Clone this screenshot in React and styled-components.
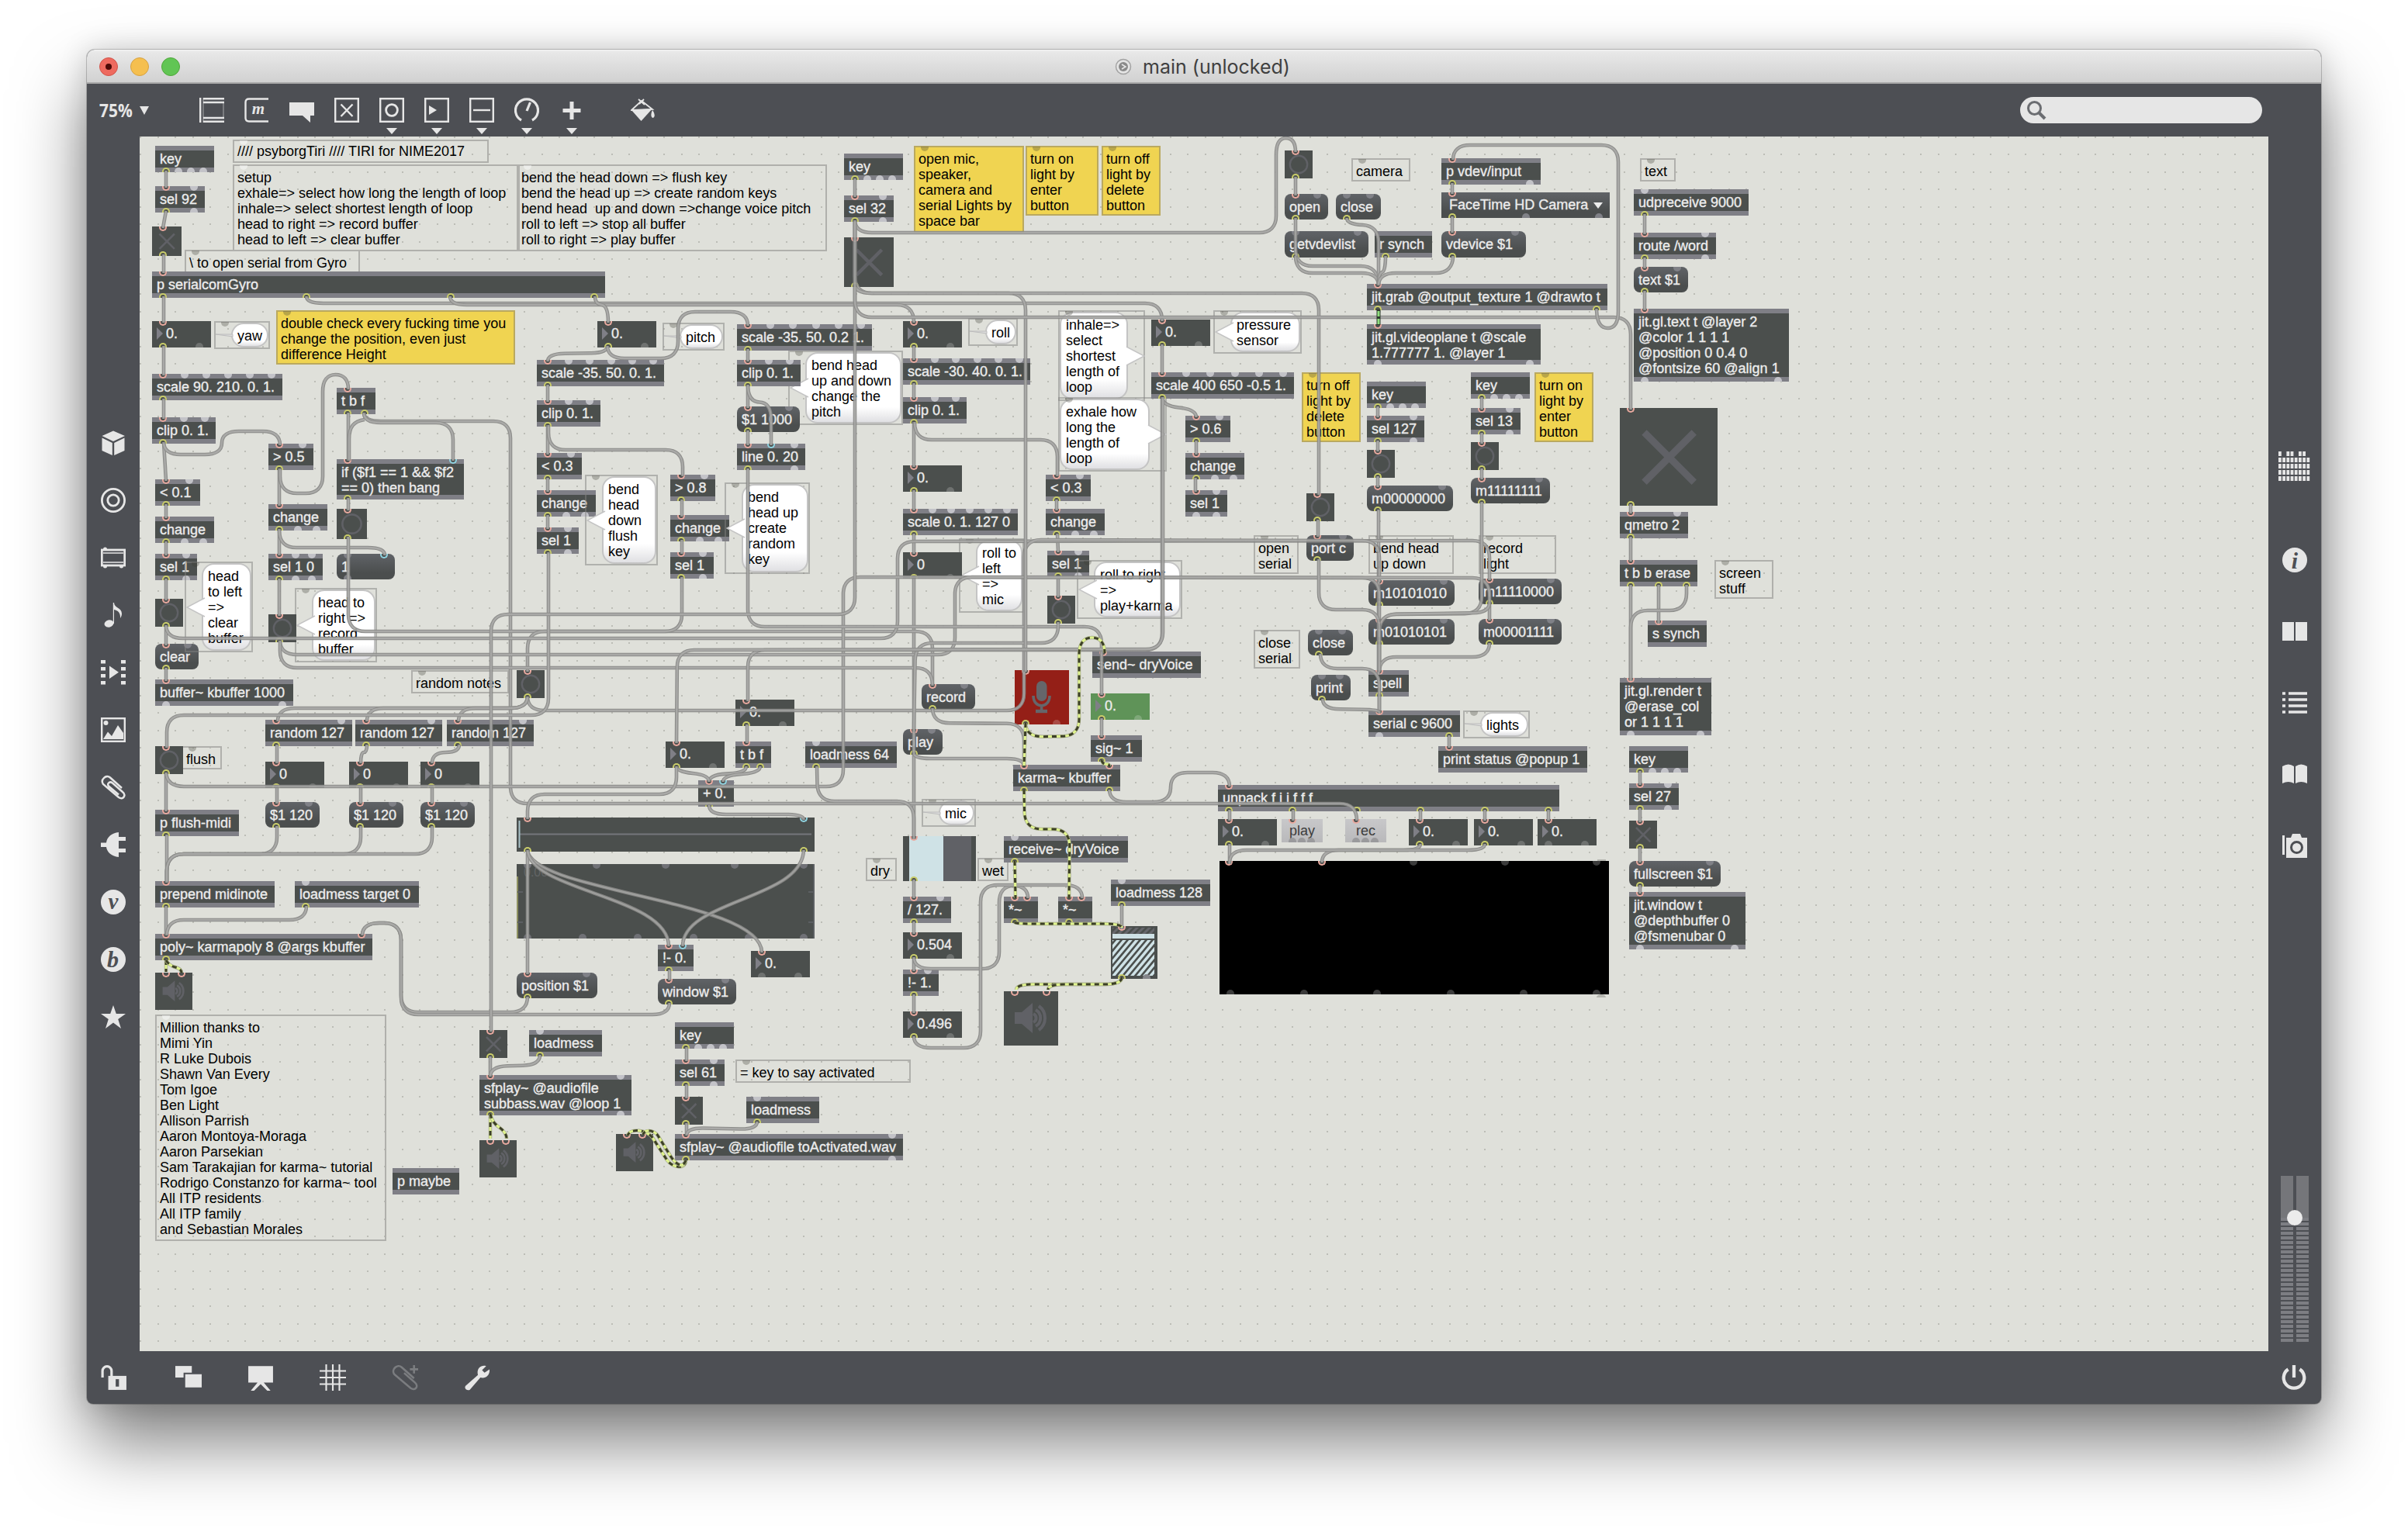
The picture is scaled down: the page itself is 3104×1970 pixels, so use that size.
import React from "react";
import styled, { createGlobalStyle, css } from "styled-components";

const C = {
  chrome: "#4d4f54",
  icon: "#e6e6e6",
  canvas: "#dfe0da",
  box: "#4b4f4d",
  bar: "#7f7f86",
  glyph: "#606166",
  yellow: "#f0d451",
};

const GlobalStyle = createGlobalStyle`
  * { box-sizing: border-box; }
  body { margin: 0; background: #fff; font-family: "Liberation Sans", Arial, sans-serif; }
`;

/* ---------- window chrome ---------- */

const Desktop = styled.div`
  width: 3104px;
  height: 1970px;
  padding: 64px 112px 160px;
  background: #fff;
  overflow: hidden;
`;

const Window = styled.div`
  width: 2880px;
  height: 1746px;
  display: grid;
  grid-template-rows: 44px 68px 1566px 68px;
  border-radius: 10px 10px 8px 8px;
  background: ${C.chrome};
  box-shadow: 0 0 0 1px rgba(0, 0, 0, 0.2), 0 50px 90px rgba(0, 0, 0, 0.5), 0 0 36px rgba(0, 0, 0, 0.16);
`;

const TitleBar = styled.header`
  display: grid;
  grid-template-columns: 1fr auto 1fr;
  align-items: center;
  padding: 0 16px;
  border-radius: 10px 10px 0 0;
  background: linear-gradient(#f4f4f4 0, #e8e8e8 3px, #d1d1d1 100%);
  border-bottom: 2px solid #a9a9a9;
`;

const Lights = styled.div`
  display: flex;
  gap: 16px;
`;

const Light = styled.span`
  width: 24px;
  height: 24px;
  border-radius: 50%;
  display: grid;
  place-items: center;
  background: ${(p) => p.$fill};
  border: 1px solid ${(p) => p.$edge};
`;

const LightDot = styled.span`
  width: 8px;
  height: 8px;
  border-radius: 50%;
  background: #4d0a07;
`;

const Title = styled.div`
  display: flex;
  align-items: center;
  gap: 14px;
  margin-right: 4px;
  font: 400 25px/44px Inter, "Liberation Sans", sans-serif;
  color: #404040;
`;

const Toolbar = styled.nav`
  display: flex;
  align-items: center;
  padding: 0 76px 0 16px;
`;

const ZoomMenu = styled.div`
  display: flex;
  align-items: center;
  gap: 9px;
  width: 129px;
  color: ${C.icon};
  font: 700 24px/30px "Open Sans", sans-serif;
  span { display: block; width: 43px; transform-origin: left; transform: scaleX(0.87); white-space: nowrap; }
`;

const Tools = styled.div`
  display: flex;
  gap: 26px;
`;

const Tool = styled.div`
  display: flex;
  flex-direction: column;
  align-items: center;
  width: 32px;
  height: 68px;
  padding-top: 18px;
  gap: 7px;
  margin-left: ${(p) => p.$gap || 0}px;
`;

const Search = styled.div`
  margin-left: auto;
  width: 312px;
  height: 34px;
  border-radius: 17px;
  background: #e6e6e6;
  display: flex;
  align-items: center;
  padding-left: 8px;
`;

const Middle = styled.div`
  display: grid;
  grid-template-columns: 68px 1fr 68px;
`;

const LeftRail = styled.aside`
  display: flex;
  flex-direction: column;
  align-items: center;
  gap: 42px;
  padding-top: 379px;
`;

const RightRail = styled.aside`
  display: flex;
  flex-direction: column;
  align-items: center;
  padding-top: 404px;
`;

const RailItem = styled.div`
  display: flex;
  width: ${(p) => p.$w || 34}px;
  height: ${(p) => p.$h || 34}px;
  margin-bottom: ${(p) => p.$after || 0}px;
`;

const BottomBar = styled.footer`
  display: flex;
  align-items: center;
  gap: 59px;
  padding: 0 18px 0 18px;
  > :first-child { margin-right: 3px; }
`;

const Push = styled.div`
  margin-left: auto;
  display: flex;
`;

/* ---------- patcher canvas ---------- */

const Canvas = styled.main`
  position: relative;
  overflow: hidden;
  background: ${C.canvas};
`;

/* nodes keep their window coordinates; the layer is shifted by the canvas origin */
const Layer = styled.div`
  position: absolute;
  left: -180px;
  top: -176px;
  width: 3104px;
  height: 1970px;
`;

const Grid = styled.svg`
  position: absolute;
  inset: 0;
  width: 100%;
  height: 100%;
`;

const Cables = styled.svg`
  position: absolute;
  left: 0;
  top: 0;
  width: 3104px;
  height: 1970px;
  fill: none;
`;

const Node = styled.div`
  position: absolute;
  left: ${(p) => p.$x}px;
  top: ${(p) => p.$y}px;
  width: ${(p) => p.$w}px;
  height: ${(p) => p.$h}px;
`;

const textStyle = css`
  font-family: "Liberation Sans", Arial, sans-serif;
  font-size: 18px;
  line-height: 20px;
  white-space: pre;
`;

const lightText = css`
  ${textStyle}
  color: #ececec;
  -webkit-text-stroke: 0.35px #ececec;
`;

const ObjectBox = styled(Node)`
  ${lightText}
  background: ${C.box};
  border: solid ${C.bar};
  border-width: 6px 0;
  padding: 1px 6px 0;
`;

const MessageBox = styled(Node)`
  ${lightText}
  padding: 7px 6px 6px;
  border-radius: 8px;
  background: linear-gradient(#606367, #4b4e4e 75%);
`;

const MenuBox = styled(MessageBox)`
  border-radius: 0;
  padding: 6px 9px 6px 10px;
  display: flex;
  justify-content: space-between;
  align-items: flex-start;
`;

const MenuArrow = styled.span`
  margin-top: 7px;
  border: 6px solid transparent;
  border-top: 8px solid #ececec;
  border-bottom: 0;
`;

const NumberBox = styled(Node)`
  ${lightText}
  background: ${(p) => p.$fill || C.box};
  padding: 6px 0 0 6px;
  display: flex;
  gap: 4px;
`;

const NumArrow = styled.span`
  margin-top: 2px;
  width: 8px;
  height: 16px;
  border: 8px solid transparent;
  border-left: 8px solid ${C.bar};
  border-right: 0;
`;

const TextButton = styled(Node)`
  ${textStyle}
  color: #3c3c3c;
  text-align: center;
  padding-top: 5px;
  background: linear-gradient(#c8c8ca, #b9b9bb);
`;

const Square = styled(Node)`
  background: ${(p) => p.$fill || C.box};
  display: flex;
  align-items: center;
  justify-content: center;
`;

const CommentBox = styled(Node)`
  ${textStyle}
  color: #000;
  border: 2px solid ${(p) => (p.$fill ? "#baa95f" : "#b0b0ac")};
  background: ${(p) => p.$fill || "transparent"};
  padding: ${(p) => (p.$high ? 3 : 5)}px 4px 0;
`;

const BubbleFrame = styled(Node)`
  ${textStyle}
  color: #000;
  border: 2px solid rgba(130, 130, 128, 0.5);
  padding: ${(p) => (p.$right ? "0 20px 0 0" : "0 0 0 20px")};
`;

const BubbleBody = styled.div`
  height: 100%;
  border-radius: 16px;
  border: 2px solid #c4c4c4;
  padding: 5px 4px 0 6px;
  background: linear-gradient(#fff 0, #fff 78%, #e0e0e3 100%);
`;

const Tail = styled.svg`
  position: absolute;
  top: 50%;
  ${(p) => (p.$right ? "right: -2px" : "left: 0")};
  margin-top: -13px;
  width: 25px;
  height: 26px;
`;

const portX = (i, n, w) => (n === 1 ? 14 : 14 + ((w - 28) * i) / (n - 1));

const Port = styled.span`
  position: absolute;
  left: ${(p) => p.$left - 5}px;
  ${(p) => (p.$out ? "bottom" : "top")}: ${(p) => -p.$inset}px;
  width: 10px;
  height: 6px;
  border-radius: ${(p) => (p.$out ? "5px 5px 0 0" : "0 0 5px 5px")};
  background: ${(p) => p.$fill};
  ${(p) =>
    p.$ring &&
    css`
      border: 2px solid ${p.$ring};
      ${p.$out ? "border-bottom" : "border-top"}: 0;
    `}
`;

const RINGS = { r: "#e9a99f", b: "#8fd3e0", y: "#c9cc6a" };

function Ports({ ins = "", outs = "", w, idle, inset = 0, inXs, outXs }) {
  const draw = (codes, out, xs) =>
    [...codes].map((c, i) => (
      <Port
        key={(out ? "o" : "i") + i}
        $left={xs ? xs[i] : portX(i, codes.length, w)}
        $out={out}
        $inset={inset}
        $ring={RINGS[c]}
        $fill={RINGS[c] ? C.box : idle}
      />
    ));
  return (
    <>
      {draw(ins, false, inXs)}
      {draw(outs, true, outXs)}
    </>
  );
}

const IDLE_BAR = "#c3c3c8";
const IDLE_BODY = "rgba(255,255,255,0.2)";
const IDLE_COMMENT = "rgba(60,60,50,0.3)";

/* [x, y, w, text, inlets, outlets, h] */
function Obj({ d: [x, y, w, t, i, o, h = 34] }) {
  return (
    <ObjectBox $x={x} $y={y} $w={w} $h={h}>
      {t}
      <Ports ins={i} outs={o} w={w} idle={IDLE_BAR} inset={6} />
    </ObjectBox>
  );
}
function Msg({ d: [x, y, w, t, i, o, h = 33] }) {
  return (
    <MessageBox $x={x} $y={y} $w={w} $h={h}>
      {t}
      <Ports ins={i} outs={o} w={w} idle="#808187" />
    </MessageBox>
  );
}
function Num({ d: [x, y, t, i = "r", o = "y.", fill] }) {
  return (
    <NumberBox $x={x} $y={y} $w={76} $h={34} $fill={fill}>
      <NumArrow />
      {t}
      <Ports ins={i} outs={o} w={75} idle={IDLE_BODY} />
    </NumberBox>
  );
}
function Bang({ d: [x, y, s = 36] }) {
  return (
    <Square $x={x} $y={y} $w={s} $h={s}>
      <svg width={s} height={s} viewBox="0 0 36 36">
        <circle cx="18" cy="18" r="11.2" fill="none" stroke={C.glyph} strokeWidth="2.4" />
      </svg>
      <Ports ins="r" outs="y" w={s} />
    </Square>
  );
}
function Toggle({ d: [x, y, s, k = 2.6] }) {
  const a = s * 0.25;
  const b = s * 0.76;
  return (
    <Square $x={x} $y={y} $w={s} $h={s}>
      <svg width={s} height={s}>
        <path d={`M${a} ${a}L${b} ${b}M${b} ${a}L${a} ${b}`} stroke={C.glyph} strokeWidth={k} />
      </svg>
      <Ports ins="r" outs="y" w={s} inXs={[14]} outXs={[14]} />
    </Square>
  );
}
function Comment({ d: [x, y, w, h, t, opt = {}] }) {
  return (
    <CommentBox $x={x} $y={y} $w={w} $h={h} $fill={opt.fill} $high={opt.high}>
      {t}
      <Ports ins="." w={w} idle={opt.pale ? "rgba(255,255,255,0.45)" : IDLE_COMMENT} inXs={[12]} inset={1} />
    </CommentBox>
  );
}
function Bubble({ d: [x, y, w, h, t, right] }) {
  const thin = h < 40;
  return (
    <BubbleFrame $x={x} $y={y} $w={w} $h={h} $right={right}>
      <BubbleBody>{t}</BubbleBody>
      <Tail $right={right} viewBox="0 0 25 26">
        {thin ? (
          <path d="M0 12H22V15Z" fill="#ddd" stroke="#bcbcbc" />
        ) : (
          <g transform={right ? "translate(25 0) scale(-1 1)" : undefined}>
            <path d="M24 1L1 13L24 25" fill="#fff" stroke="#c4c4c4" strokeWidth="1.5" />
          </g>
        )}
      </Tail>
      <Ports ins="." w={w} idle={IDLE_COMMENT} inXs={[12]} inset={1} />
    </BubbleFrame>
  );
}
function Speaker({ d: [x, y, s, two] }) {
  return (
    <Square $x={x} $y={y} $w={s} $h={s}>
      <svg width={s} height={s} viewBox="0 0 70 70" fill="none" stroke={C.glyph}>
        <path d="M14 27H23L37 15V54L23 42H14Z" fill={C.glyph} stroke="none" />
        <path d="M38 29A6 6 0 0 1 38 40M41 24A12 12 0 0 1 41 45M45 19A19 19 0 0 1 45 50" strokeWidth="4" />
      </svg>
      <Ports ins="rr" w={s} inXs={[14, two]} />
    </Square>
  );
}
function Mic() {
  return (
    <Square $x={1308} $y={864} $w={70} $h={70} $fill="#941f17">
      <svg width="70" height="70" fill="none" stroke="#65666a">
        <rect x="28" y="14" width="13.5" height="26" rx="6.7" fill="#65666a" stroke="none" />
        <path d="M24 33C24 50 45 50 45 33M34.6 46V53" strokeWidth="3.6" />
        <path d="M27 53H42" strokeWidth="4.4" />
      </svg>
      <Ports ins="r" outs="y." w={68} idle={IDLE_BODY} />
    </Square>
  );
}
function RangeSlider() {
  return (
    <Square $x={666} $y={1054} $w={384} $h={44}>
      <svg width="384" height="44">
        <path d="M4 21.5H380" stroke="#75767c" strokeWidth="2" />
        <path d="M3.5 4V39" stroke="#a9c3c8" strokeWidth="2" />
      </svg>
      <Ports ins="rb" outs="yy" w={384} />
    </Square>
  );
}
function Waveform() {
  return (
    <Square $x={666} $y={1114} $w={384} $h={96}>
      <svg width="384" height="96">
        <path d="M1 16V96" stroke="#8e9160" strokeWidth="2" />
        <path d="M1 36H8M1 75H8M383 0V96M376 36H384M376 75H384" stroke="#5c5f62" strokeWidth="2" />
        <text x="9" y="16" fontSize="16" fill="#626565" fontFamily="Liberation Sans, sans-serif">0.00</text>
      </svg>
      <Ports ins="....." outs="......" w={384} idle="#707176" />
    </Square>
  );
}
function DryWet() {
  return (
    <Square $x={1164} $y={1078} $w={94} $h={58}>
      <svg width="94" height="58">
        <rect x="8" width="44" height="58" fill="#cfe2e6" />
        <rect x="52" width="36" height="58" fill={C.glyph} />
      </svg>
      <Ports ins="r" outs="y" w={94} />
    </Square>
  );
}
function Gain() {
  const lines = [];
  for (let i = -60; i < 70; i += 8) lines.push(`M${i} 68L${i + 44} 15`);
  return (
    <Square $x={1432} $y={1194} $w={60} $h={68}>
      <svg width="60" height="68">
        <defs>
          <clipPath id="gainTop"><rect x="2" y="2" width="54" height="8" /></clipPath>
          <clipPath id="gainBody"><rect x="2" y="18" width="54" height="46" /></clipPath>
        </defs>
        <path clipPath="url(#gainTop)" d={lines.map((l, k) => `M${k * 8 - 40} 12l12 -12`).join("")} stroke="#66676c" strokeWidth="3" />
        <rect x="2" y="10" width="54" height="6" fill="#cfe2e6" />
        <g clipPath="url(#gainBody)">
          <rect x="2" y="18" width="54" height="46" fill="#cfe2e6" />
          <path d={lines.join("")} stroke={C.box} strokeWidth="2.6" />
        </g>
      </svg>
      <Ports ins="r" outs="y." w={60} idle="#85868b" />
    </Square>
  );
}
function VideoWindow() {
  return (
    <Square $x={1572} $y={1110} $w={502} $h={172} $fill="#000">
      <Ports ins="rr..." outs="......" w={500} idle="#3b3b3b" inXs={[12, 132, 250, 368, 486]} outXs={[14, 109, 203, 298, 392, 486]} />
    </Square>
  );
}
function Menu() {
  return (
    <MenuBox $x={1858} $y={248} $w={217} $h={33}>
      FaceTime HD Camera
      <MenuArrow />
      <Ports ins="r" outs="y.." w={217} idle="#808187" />
    </MenuBox>
  );
}
function Button({ d: [x, w, t] }) {
  return (
    <TextButton $x={x} $y={1056} $w={w} $h={30}>
      {t}
      <Ports ins="r" outs="..." w={w} idle="#9a9a9c" outXs={[14, 26, 38]} />
    </TextButton>
  );
}

const KINDS = { o: Obj, m: Msg, n: Num, b: Bang, t: Toggle, c: Comment, u: Bubble, s: Speaker, k: Button };
const Y = { fill: C.yellow };

/* drawing order is stacking order */
const NODES = [
  /* notes that lie under objects */
  ["c", 238, 322, 226, 30, "\\ to open serial from Gyro"],
  ["u", 1016, 452, 148, 96, "bend head\nup and down\nchange the\npitch"],
  ["u", 1236, 694, 84, 96, "roll to\nleft\n=>\nmic"],
  ["u", 1364, 400, 112, 117, "inhale=>\nselect\nshortest\nlength of\nloop", true],
  ["u", 1364, 512, 140, 96, "exhale how\nlong the\nlength of\nloop", true],
  ["c", 234, 962, 52, 30, "flush"],
  ["c", 1260, 1106, 40, 30, "wet"],
  ["c", 1116, 1106, 40, 30, "dry"],

  ["c", 300, 180, 330, 30, "//// psyborgTiri //// TIRI for NIME2017", { pale: true, high: true }],
  ["c", 300, 212, 370, 112, "setup\nexhale=> select how long the length of loop\ninhale=> select shortest length of loop\nhead to right => record buffer\nhead to left => clear buffer", { pale: true }],
  ["c", 666, 212, 400, 112, "bend the head down => flush key\nbend the head up => create random keys\nbend head  up and down =>change voice pitch\nroll to left => stop all buffer\nroll to right => play buffer", { pale: true }],
  ["c", 356, 400, 308, 70, "double check every fucking time you\nchange the position, even just\ndifference Height", Y],
  ["c", 1178, 188, 142, 112, "open mic,\nspeaker,\ncamera and\nserial Lights by\nspace bar", Y],
  ["c", 1322, 188, 94, 90, "turn on\nlight by\nenter\nbutton", Y],
  ["c", 1420, 188, 76, 90, "turn off\nlight by\ndelete\nbutton", Y],
  ["c", 1678, 480, 76, 90, "turn off\nlight by\ndelete\nbutton", Y],
  ["c", 1978, 480, 76, 90, "turn on\nlight by\nenter\nbutton", Y],
  ["c", 1742, 204, 76, 30, "camera"],
  ["c", 2114, 204, 46, 30, "text"],
  ["c", 530, 864, 126, 30, "random notes"],
  ["c", 1616, 690, 58, 50, "open\nserial"],
  ["c", 1616, 812, 60, 50, "close\nserial"],
  ["c", 1764, 690, 110, 50, "bend head\nup down"],
  ["c", 1906, 690, 100, 50, "record\nlight"],
  ["c", 2210, 722, 76, 50, "screen\nstuff"],
  ["c", 948, 1366, 226, 30, "= key to say activated"],
  ["c", 200, 1308, 298, 292, "Million thanks to\nMimi Yin\nR Luke Dubois\nShawn Van Every\nTom Igoe\nBen Light\nAllison Parrish\nAaron Montoya-Moraga\nAaron Parsekian\nSam Tarakajian for karma~ tutorial\nRodrigo Constanzo for karma~ tool\nAll ITP residents\nAll ITP family\nand Sebastian Morales", { pale: true }],

  /* yaw column */
  ["o", 200, 188, 76, "key", "", "y..."],
  ["o", 200, 240, 64, "sel 92", "r.", "y."],
  ["t", 196, 292, 38],
  ["o", 196, 350, 584, "p serialcomGyro", "r", "yyyy"],
  ["n", 196, 414, "0."],
  ["u", 276, 414, 72, 36, "yaw"],
  ["o", 196, 482, 168, "scale 90. 210. 0. 1.", "r.....", "y"],
  ["o", 196, 538, 82, "clip 0. 1.", "r..", "y"],
  ["o", 346, 572, 58, "> 0.5", "r.", "y"],
  ["o", 434, 500, 50, "t b f", "r", "yy"],
  ["o", 434, 592, 164, "if ($f1 == 1 && $f2\n== 0) then bang", "rb", "y", 52],
  ["o", 200, 618, 58, "< 0.1", "r.", "y"],
  ["o", 200, 666, 76, "change", "r", "y.."],
  ["o", 200, 714, 54, "sel 1", "r.", "y."],
  ["b", 200, 772],
  ["m", 200, 830, 56, "clear", "r.", "y"],
  ["u", 238, 724, 88, 117, "head\nto left\n=>\nclear\nbuffer"],
  ["o", 200, 876, 178, "buffer~ kbuffer 1000", "r", ".."],
  ["o", 346, 650, 76, "change", "r", "y.."],
  ["b", 434, 656, 39],
  ["o", 346, 714, 70, "sel 1 0", "r..", "y.."],
  ["m", 434, 714, 75, "1", ".b", "."],
  ["u", 380, 758, 106, 96, "head to\nright =>\nrecord\nbuffer"],
  ["b", 346, 792],
  ["b", 666, 864],
  ["o", 342, 928, 112, "random 127", "r.", "y"],
  ["o", 458, 928, 112, "random 127", "r.", "y"],
  ["o", 576, 928, 112, "random 127", "r.", "y"],
  ["b", 200, 962],
  ["n", 342, 982, "0"],
  ["n", 450, 982, "0"],
  ["n", 542, 982, "0"],
  ["m", 342, 1034, 70, "$1 120", "r.", "y"],
  ["m", 450, 1034, 70, "$1 120", "r.", "y"],
  ["m", 542, 1034, 70, "$1 120", "r.", "y"],
  ["o", 200, 1044, 108, "p flush-midi", "r", "y"],
  ["o", 200, 1136, 154, "prepend midinote", "r", "y"],
  ["o", 380, 1136, 160, "loadmess target 0", ".", "y"],
  ["o", 200, 1204, 280, "poly~ karmapoly 8 @args kbuffer", "rr", "y"],
  ["s", 200, 1254, 48, 34],
  ["o", 506, 1506, 86, "p maybe", "", ""],
  ["t", 618, 1328, 36],
  ["o", 682, 1328, 94, "loadmess", ".", "y"],
  ["o", 618, 1386, 196, "sfplay~ @audiofile\nsubbass.wav @loop 1", "r.", "y.", 52],
  ["s", 618, 1470, 48, 34],
  ["m", 666, 1254, 104, "position $1", "r.", "y"],

  /* pitch columns */
  ["n", 770, 414, "0."],
  ["u", 854, 416, 80, 36, "pitch"],
  ["o", 950, 418, 174, "scale -35. 50. 0.2 1.", "r.....", "y"],
  ["o", 692, 464, 164, "scale -35. 50. 0. 1.", "r.....", "y"],
  ["o", 692, 516, 82, "clip 0. 1.", "r..", "y"],
  ["o", 692, 584, 58, "< 0.3", "r.", "y"],
  ["o", 692, 632, 76, "change", "r", "y.."],
  ["o", 692, 680, 54, "sel 1", "r.", "y."],
  ["u", 754, 612, 94, 117, "bend\nhead\ndown\nflush\nkey"],
  ["o", 864, 612, 58, "> 0.8", "r.", "y"],
  ["o", 864, 664, 76, "change", "r", "y.."],
  ["o", 864, 712, 56, "sel 1", "r.", "y."],
  ["u", 934, 622, 110, 118, "bend\nhead up\ncreate\nrandom\nkey"],
  ["o", 950, 464, 82, "clip 0. 1.", "r..", "y"],
  ["m", 950, 524, 81, "$1 1000", "r.", "y"],
  ["o", 950, 572, 88, "line 0. 20", "rb.", "y."],
  ["n", 948, 902, "0."],
  ["n", 858, 956, "0."],
  ["o", 948, 956, 46, "t b f", "r", "yy"],
  ["o", 900, 1006, 46, "+ 0.", "rb", "y"],
  ["o", 1038, 956, 118, "loadmess 64", ".", "y"],

  /* roll column */
  ["o", 1088, 198, 76, "key", "", "y..."],
  ["o", 1088, 252, 64, "sel 32", "r.", "y."],
  ["t", 1088, 306, 64, 4.5],
  ["n", 1164, 414, "0."],
  ["u", 1248, 410, 64, 36, "roll"],
  ["o", 1164, 462, 164, "scale -30. 40. 0. 1.", "r.....", "y"],
  ["o", 1164, 512, 82, "clip 0. 1.", "r..", "y"],
  ["n", 1164, 600, "0."],
  ["o", 1164, 656, 148, "scale 0. 1. 127 0", "r.....", "y"],
  ["n", 1164, 712, "0"],
  ["o", 1348, 612, 58, "< 0.3", "r.", "y"],
  ["o", 1348, 656, 76, "change", "r", "y.."],
  ["o", 1350, 710, 54, "sel 1", "r.", "y."],
  ["b", 1350, 768],
  ["u", 1388, 722, 136, 76, "roll to right\n=>\nplay+karma"],

  /* pressure column */
  ["n", 1484, 412, "0."],
  ["u", 1564, 400, 114, 56, "pressure\nsensor"],
  ["o", 1484, 480, 184, "scale 400 650 -0.5 1.", "r.....", "y"],
  ["o", 1528, 536, 58, "> 0.6", "r.", "y"],
  ["o", 1528, 584, 76, "change", "r", "y.."],
  ["o", 1528, 632, 54, "sel 1", "r.", ".."],

  /* audio */
  ["o", 1408, 840, 140, "send~ dryVoice", "r", ""],
  ["n", 1406, 894, "0.", "r", "y.", "#5f9358"],
  ["o", 1406, 948, 66, "sig~ 1", "r", "y"],
  ["o", 1306, 986, 138, "karma~ kbuffer", "rr", "yy"],
  ["m", 1188, 882, 69, "record", "r.", "y"],
  ["m", 1164, 940, 51, "play", "r.", "y"],
  ["u", 1188, 1030, 70, 36, "mic"],
  ["o", 1294, 1078, 160, "receive~ dryVoice", ".", "y"],
  ["o", 1570, 1012, 440, "unpack f i i f f f", "r", "yyyyyy"],
  ["n", 1570, 1056, "0."],
  ["k", 1652, 53, "play"],
  ["k", 1734, 53, "rec"],
  ["n", 1816, 1056, "0."],
  ["n", 1900, 1056, "0."],
  ["n", 1982, 1056, "0.", "r", ".."],
  ["o", 1164, 1156, 62, "/ 127.", "r.", "y"],
  ["n", 1164, 1202, "0.504"],
  ["o", 1164, 1250, 46, "!- 1.", "r.", "y"],
  ["n", 1164, 1304, "0.496"],
  ["o", 1294, 1156, 44, "*~", "rr", "y"],
  ["o", 1364, 1156, 44, "*~", "rr", "y"],
  ["o", 1432, 1134, 128, "loadmess 128", ".", "y"],
  ["s", 1294, 1278, 70, 55],
  ["o", 848, 1218, 46, "!- 0.", "rb", "y"],
  ["n", 968, 1226, "0.", "r", ".."],
  ["m", 848, 1262, 101, "window $1", "r.", "y"],
  ["o", 870, 1318, 76, "key", "", "y..."],
  ["o", 870, 1366, 64, "sel 61", "r.", "y."],
  ["t", 870, 1414, 36],
  ["o", 962, 1414, 94, "loadmess", ".", "y"],
  ["o", 870, 1462, 294, "sfplay~ @audiofile toActivated.wav", "r.", "y."],
  ["s", 794, 1462, 48, 34],

  /* camera */
  ["b", 1656, 194],
  ["m", 1656, 250, 56, "open", "r.", "y"],
  ["m", 1722, 250, 58, "close", "..", "y"],
  ["m", 1656, 298, 108, "getvdevlist", "..", "y", 34],
  ["o", 1772, 298, 74, "r synch", "", "y"],
  ["m", 1858, 298, 109, "vdevice $1", "r.", "y", 34],
  ["o", 1858, 204, 128, "p vdev/input", "r", "y."],
  ["o", 1762, 366, 310, "jit.grab @output_texture 1 @drawto t", "r", "yy"],
  ["o", 1762, 418, 224, "jit.gl.videoplane t @scale\n1.777777 1. @layer 1", "r", "..", 52],

  /* text rendering */
  ["o", 2106, 244, 148, "udpreceive 9000", ".", "y"],
  ["o", 2106, 300, 106, "route /word", "r.", "y."],
  ["m", 2106, 344, 70, "text $1", "r.", "y"],
  ["o", 2106, 398, 200, "jit.gl.text t @layer 2\n@color 1 1 1 1\n@position 0 0.4 0\n@fontsize 60 @align 1", "r", "..", 94],
  ["t", 2088, 526, 126, 9],
  ["o", 2088, 660, 88, "qmetro 2", "r.", "y"],
  ["o", 2088, 722, 100, "t b b erase", "r", "yyy"],
  ["o", 2124, 800, 76, "s synch", "r", ""],
  ["o", 2088, 874, 118, "jit.gl.render t\n@erase_col\nor 1 1 1 1", "r", "..", 74],
  ["o", 2100, 962, 76, "key", "", "y..."],
  ["o", 2100, 1010, 64, "sel 27", "r.", "y."],
  ["t", 2100, 1058, 36],
  ["m", 2100, 1110, 118, "fullscreen $1", "r.", "y"],
  ["o", 2100, 1150, 150, "jit.window t\n@depthbuffer 0\n@fsmenubar 0", "r", "..", 74],

  /* serial lights */
  ["o", 1762, 492, 76, "key", "", "y..."],
  ["o", 1762, 536, 74, "sel 127", "r.", "y."],
  ["b", 1762, 580],
  ["m", 1762, 626, 111, "m00000000", "r.", "y"],
  ["o", 1896, 480, 76, "key", "", "y..."],
  ["o", 1896, 526, 64, "sel 13", "r.", "y."],
  ["b", 1896, 570],
  ["m", 1896, 616, 102, "m11111111", "r.", "y"],
  ["b", 1684, 636],
  ["m", 1684, 690, 61, "port c", "r.", "y"],
  ["m", 1764, 748, 111, "m10101010", "r.", "y"],
  ["m", 1906, 746, 107, "m11110000", "r.", "y"],
  ["m", 1764, 798, 111, "m01010101", "r.", "y"],
  ["m", 1906, 798, 107, "m00001111", "r.", "y"],
  ["m", 1686, 812, 58, "close", "..", "y"],
  ["m", 1690, 870, 51, "print", "..", "y"],
  ["o", 1764, 864, 52, "spell", "r", "y"],
  ["o", 1764, 916, 118, "serial c 9600", "r", ".y"],
  ["u", 1886, 916, 86, 36, "lights"],
  ["o", 1854, 962, 192, "print status @popup 1", "r", ""],
];

/* straight vertical runs: x, from, to [, x at the far end] */
const STRAIGHT = [
  [214, 222, 240], [214, 274, 292, 210], [211, 330, 350], [211, 384, 414], [211, 448, 482], [211, 516, 538],
  [211, 572, 618, 214], [214, 652, 666], [214, 700, 714], [214, 748, 772], [214, 808, 830], [214, 863, 876],
  [360, 606, 650], [360, 684, 714], [360, 748, 792], [449, 534, 592], [449, 644, 656],
  [357, 962, 982], [357, 1016, 1034], [465, 1016, 1034], [557, 1016, 1034],
  [214, 998, 1044], [215, 1078, 1136], [214, 1170, 1204],
  [632, 1364, 1386], [680, 1098, 1254],
  [706, 498, 516], [706, 550, 584], [706, 618, 632], [706, 666, 680],
  [879, 646, 664], [879, 698, 712],
  [964, 452, 464], [964, 498, 524], [964, 557, 572], [963, 936, 956],
  [1102, 232, 252], [1102, 286, 306],
  [1178, 448, 462], [1178, 496, 512], [1178, 546, 600], [1178, 634, 656], [1178, 690, 712], [1178, 746, 1080],
  [1178, 1136, 1156], [1178, 1190, 1202], [1178, 1236, 1250], [1178, 1284, 1304],
  [1362, 646, 656], [1363, 690, 710, 1364], [1364, 744, 768],
  [1498, 446, 480], [1542, 570, 584], [1541, 618, 632],
  [1420, 928, 948], [1446, 1168, 1196],
  [1585, 1046, 1056], [1667, 1046, 1056], [1831, 1046, 1056], [1914, 1046, 1056], [1996, 1046, 1056], [1585, 1090, 1112],
  [863, 1252, 1262], [885, 1352, 1366], [885, 1400, 1414], [885, 1450, 1462],
  [1670, 230, 250], [1872, 238, 248], [1872, 281, 298],
  [2120, 278, 300], [2120, 334, 344], [2120, 377, 398],
  [2102, 652, 660], [2102, 694, 722], [2102, 756, 876], [2138, 756, 802],
  [2114, 996, 1010], [2114, 1044, 1058], [2114, 1094, 1110], [2114, 1143, 1150],
  [1776, 526, 536], [1776, 570, 580], [1776, 616, 626], [1777, 659, 868],
  [1910, 514, 526], [1910, 560, 570], [1910, 606, 616],
  [1699, 672, 690], [1778, 898, 918], [1868, 950, 962],
];

const ROUTED = [
  [211, 570, 211, 586, 286, 586, 286, 556, 361, 556, 361, 574],
  [361, 604, 361, 636, 416, 636, 416, 483, 449, 483, 449, 502],
  [469, 532, 469, 543, 658, 543, 658, 1036, 1749, 1036, 1749, 1058],
  [469, 532, 469, 545, 584, 545, 584, 594],
  [360, 682, 360, 706, 496, 706, 496, 716],
  [449, 692, 449, 814, 1202, 814, 1202, 884],
  [879, 744, 879, 814, 680, 814, 680, 866],
  [214, 806, 214, 823, 1157, 823, 1157, 698, 1920, 697, 1920, 748],
  [680, 898, 680, 916, 1320, 916, 1320, 696, 1778, 697, 1778, 750],
  [214, 996, 215, 1014, 1087, 1014, 1087, 744, 1778, 745, 1778, 800],
  [361, 826, 361, 844, 1231, 844, 1231, 744, 1920, 745, 1920, 800],
  [361, 826, 361, 861, 1202, 861, 1202, 884],
  [680, 898, 680, 913, 358, 913, 358, 930],
  [680, 898, 680, 913, 473, 913, 473, 930],
  [680, 898, 680, 913, 591, 913, 591, 930],
  [707, 712, 707, 922, 215, 922, 215, 964],
  [473, 960, 473, 970, 465, 970, 465, 984],
  [592, 960, 592, 970, 557, 970, 557, 984],
  [357, 1065, 357, 1101, 215, 1101, 215, 1138],
  [465, 1065, 465, 1101, 215, 1101, 215, 1138],
  [557, 1065, 557, 1101, 215, 1101, 215, 1138],
  [395, 1168, 395, 1186, 215, 1186, 215, 1206],
  [680, 1285, 680, 1305, 517, 1305, 517, 1190, 467, 1190, 467, 1206],
  [863, 1293, 863, 1308, 517, 1308, 517, 1190, 467, 1190, 467, 1206],
  [696, 1360, 696, 1373, 632, 1375, 632, 1388],
  [395, 382, 395, 391, 1498, 391, 1498, 414],
  [580, 382, 580, 393, 1178, 393, 1178, 416],
  [767, 382, 767, 392, 784, 394, 784, 416],
  [783, 446, 783, 455, 706, 456, 706, 466],
  [783, 446, 783, 462, 874, 462, 874, 402, 964, 402, 964, 420],
  [707, 548, 707, 580, 880, 580, 880, 614],
  [964, 496, 964, 518, 994, 519, 994, 574],
  [964, 604, 964, 808, 1420, 808, 1420, 896],
  [1179, 544, 1179, 567, 1363, 567, 1363, 614],
  [1364, 802, 1364, 829, 1180, 829, 1178, 942],
  [1102, 284, 1102, 300, 1645, 300, 1645, 178, 1670, 178, 1670, 196],
  [1102, 284, 1102, 792, 633, 792, 633, 1330],
  [1102, 284, 1102, 378, 1322, 378, 1322, 866],
  [1102, 366, 1102, 378, 1700, 378, 1700, 638],
  [1102, 284, 1102, 409, 2102, 409, 2102, 528],
  [1498, 512, 1498, 523, 1542, 528, 1542, 538],
  [1498, 512, 1498, 838, 964, 838, 964, 904],
  [1499, 512, 1499, 837, 873, 838, 872, 958],
  [962, 988, 962, 996, 914, 999, 914, 1008],
  [980, 988, 980, 996, 932, 1000, 932, 1008],
  [872, 988, 872, 995, 914, 999, 914, 1008],
  [872, 988, 872, 1024, 680, 1024, 680, 1056],
  [914, 1038, 914, 1050, 1036, 1050, 1036, 1057],
  [1053, 988, 1054, 1033, 1178, 1033, 1178, 1080],
  [1178, 1234, 1178, 1249, 1288, 1249, 1288, 1142, 1325, 1142, 1325, 1158],
  [1178, 1336, 1178, 1351, 1264, 1351, 1264, 1141, 1395, 1141, 1395, 1158],
  [1202, 913, 1202, 932, 1320, 933, 1320, 988],
  [1178, 971, 1178, 978, 1320, 978, 1320, 988],
  [1430, 1018, 1430, 1034, 1509, 1034, 1509, 996, 1585, 996, 1585, 1014],
  [1831, 1088, 1831, 1096, 1704, 1096, 1704, 1112],
  [1914, 1088, 1914, 1096, 1585, 1096, 1585, 1112],
  [976, 1446, 976, 1456, 885, 1454, 885, 1464],
  [1670, 281, 1670, 343, 1776, 343, 1777, 368],
  [1670, 330, 1670, 352, 1777, 352, 1777, 368],
  [1736, 281, 1736, 289, 1777, 291, 1777, 368],
  [1786, 330, 1786, 350, 1777, 352, 1777, 368],
  [1873, 330, 1873, 352, 1777, 352, 1777, 368],
  [2058, 398, 2059, 423, 2086, 423, 2086, 187, 1873, 187, 1873, 206],
  [1910, 647, 1910, 791, 1778, 792, 1778, 866],
  [1920, 777, 1920, 790, 1778, 792, 1778, 866],
  [1920, 829, 1920, 847, 1778, 847, 1778, 866],
  [1700, 721, 1700, 786, 1778, 786, 1778, 866],
  [1702, 843, 1702, 862, 1778, 862, 1778, 918],
  [1705, 901, 1705, 914, 1778, 915, 1778, 918],
  [2174, 754, 2174, 787, 2102, 787, 2102, 876],
];

const FREE = [
  "M470 541C456 543 450 550 450 566V594",
  "M680 1096C684 1150 982 1160 982 1228",
  "M680 1096C684 1150 862 1155 862 1220",
  "M1036 1096C1034 1160 880 1160 880 1220",
];

const SIGNAL = [
  [1322, 932, 1322, 950, 1391, 949, 1391, 822, 1424, 822, 1424, 842],
  [1322, 932, 1320, 988],
  [1420, 980, 1421, 985, 1430, 985, 1430, 988],
  [1320, 1018, 1321, 1069, 1379, 1069, 1378, 1158],
  [1308, 1110, 1309, 1158],
  [1308, 1189, 1309, 1191, 1446, 1191, 1446, 1196],
  [1446, 1260, 1446, 1269, 1310, 1269, 1310, 1276],
  [1446, 1260, 1446, 1269, 1351, 1269, 1351, 1276],
  [214, 1238, 214, 1253],
  [214, 1238, 218, 1245, 234, 1249, 234, 1254],
  [632, 1436, 632, 1468],
  [632, 1436, 634, 1447, 653, 1460, 653, 1468],
].map((p) => roundedPath(p));

const SIGNAL_FREE = [
  "M884 1496C884 1508 868 1506 860 1496L842 1468C834 1456 812 1454 809 1464",
  "M884 1496C880 1508 870 1500 864 1490L848 1464C842 1456 830 1456 829 1463",
];

function roundedPath(p, r = 22) {
  const n = p.length / 2;
  let d = `M${p[0]} ${p[1]}`;
  for (let i = 1; i < n - 1; i++) {
    const [x0, y0, x, y, x1, y1] = p.slice(2 * i - 2, 2 * i + 4);
    const a = Math.hypot(x - x0, y - y0);
    const b = Math.hypot(x1 - x, y1 - y);
    const ra = Math.min(r, i === 1 ? a : a / 2);
    const rb = Math.min(r, i === n - 2 ? b : b / 2);
    const sx = x + ((x0 - x) * ra) / a;
    const sy = y + ((y0 - y) * ra) / a;
    const ex = x + ((x1 - x) * rb) / b;
    const ey = y + ((y1 - y) * rb) / b;
    const k = 0.35;
    d += `L${sx} ${sy}C${x + (sx - x) * k} ${y + (sy - y) * k} ${x + (ex - x) * k} ${y + (ey - y) * k} ${ex} ${ey}`;
  }
  return d + `L${p[2 * n - 2]} ${p[2 * n - 1]}`;
}

const CONTROL = [
  ...STRAIGHT.map(([x, a, b, x2 = x]) => `M${x} ${a - 2}L${x2} ${b + 2}`),
  ...ROUTED.map((p) => roundedPath(p)),
  ...FREE,
];

function Cord({ d }) {
  return (
    <g>
      <path d={d} stroke="#868684" strokeWidth="4.6" />
      <path d={d} stroke="#a5a5a3" strokeWidth="2.4" />
    </g>
  );
}
function SignalCord({ d }) {
  return (
    <g>
      <path d={d} stroke="#a3a78c" strokeWidth="4.4" />
      <path d={d} stroke="#e0f48e" strokeWidth="3" />
      <path d={d} stroke="#3c3f28" strokeWidth="3" strokeDasharray="6 5" />
    </g>
  );
}

/* ---------- icons ---------- */

const S = ({ w = 32, h = w, vb = "0 0 32 32", children }) => (
  <svg width={w} height={h} viewBox={vb} fill="none" stroke={C.icon} strokeWidth="2.4">
    {children}
  </svg>
);
const solid = { fill: C.icon, stroke: "none" };
const Down = () => (
  <svg width="14" height="8" viewBox="0 0 14 8"><path d="M0 0H14L7 8Z" fill={C.icon} /></svg>
);
const serif = { fontFamily: "Liberation Serif, serif", fontStyle: "italic", fontWeight: 700, stroke: "none", textAnchor: "middle" };

const TOOLS = [
  { icon: <S><path d="M1.2 0V32M5 1.2H32M5 6H32M5 26H32M5 30.8H32" /><path d="M5 0V32M31 6V26" strokeWidth="1" opacity=".6" /></S> },
  { icon: <S><path d="M31 1.5H6Q1.5 1.5 1.5 6V26Q1.5 30.5 6 30.5H31" /><text x="18" y="21" fontSize="21" fill={C.icon} {...serif}>m</text></S> },
  { icon: <S><path d="M0 6H32V23H27V32L17 23H0Z" {...solid} /></S> },
  { icon: <S><rect x="1.2" y="1.2" width="29.6" height="29.6" /><path d="M8.5 8.5L23.5 24M23.5 8.5L8.5 24" /></S> },
  { icon: <S><rect x="1.2" y="1.2" width="29.6" height="29.6" /><circle cx="16" cy="16" r="7.4" strokeWidth="2.8" /></S>, more: true },
  { icon: <S><rect x="1.2" y="1.2" width="29.6" height="29.6" /><path d="M6 10L16 16L6 22Z" {...solid} /></S>, more: true },
  { icon: <S><rect x="1.2" y="1.2" width="29.6" height="29.6" /><path d="M5 16H27" /></S>, more: true },
  { icon: <S><path d="M9 29A14.5 14.5 0 1 1 23 29" strokeWidth="3.2" /><path d="M16 17L20.5 6" strokeWidth="3.2" /></S>, more: true },
  { icon: <S><path d="M4.5 16.5H27.5M16 5V28" strokeWidth="5" /></S>, more: true },
  { icon: <S><path d="M1 16L14 4L28 15Z" strokeWidth="1.8" /><path d="M1 16L28 14L13.5 30Z" {...solid} /><path d="M10 2L18 9M17 2L11 8" strokeWidth="1.8" /><path d="M28 16C31 20 32 25 28.5 26C25.5 25 26 20 28 16Z" {...solid} /></S>, gap: 34 },
];

const LEFT = [
  <S><path d="M16 0.5L31 7L16 14L1.5 7ZM1.5 9.5L14.8 16V32L1.5 26ZM30.5 9.5L17.2 16V32L30.5 26Z" {...solid} /></S>,
  <S><circle cx="16" cy="16" r="14.6" strokeWidth="2.8" /><circle cx="16" cy="16" r="7.2" strokeWidth="2.8" /></S>,
  <S><rect x="1.3" y="6" width="29.4" height="20" strokeWidth="2.8" /><path d="M3 10H29M3 22H29" strokeWidth="1.6" /><path d="M3 5a2.5 2.5 0 0 1 5 0zM3 27a2.5 2.5 0 0 0 5 0zM24 27a2.5 2.5 0 0 0 5 0z" {...solid} /></S>,
  <S><ellipse cx="10.5" cy="27" rx="6" ry="4.6" transform="rotate(-15 10.5 27)" {...solid} /><path d="M15.8 27V0H17C17 7 27 6 27 14C27 17 26 18.5 25 20C25.5 13 22 10 17 9V27Z" {...solid} /></S>,
  <S><path d="M0 0H6V4.5H0ZM0 9H6V13.5H0ZM0 18H6V22.5H0ZM0 27H6V31.5H0ZM26 0H32V4.5H26ZM26 9H32V13.5H26ZM26 18H32V22.5H26ZM26 27H32V31.5H26ZM11 7.5L23 15.8L11 24Z" {...solid} /></S>,
  <S><rect x="1.2" y="1.2" width="29.6" height="29.6" /><path d="M3 28L9 18.5L14 24L22 10L29 20V28Z" {...solid} /><circle cx="6.5" cy="7" r="3" {...solid} /></S>,
  <S><path d="M27 17L12 3.5C7 -1 -1 6 3 12L23 29C29 33 33 26 28 22L15 10.5C11 7.5 7 12 10.5 15L23 25.5" strokeWidth="2.5" /></S>,
  <S><path d="M0 13.5H7C8 6 14 1 23 0V32C14 31 8 26 7 19H0ZM22 6H32V11H22ZM22 21H32V26H22Z" {...solid} /></S>,
  <S><circle cx="16" cy="16" r="16" {...solid} /><text x="16" y="25" fontSize="29" fill={C.chrome} {...serif}>v</text></S>,
  <S><circle cx="16" cy="16" r="16" {...solid} /><text x="15.5" y="26" fontSize="30" fill={C.chrome} {...serif}>b</text></S>,
  <S><path d="M16 1L19.8 12H32L22.2 19L26 31L16 23.5L6 31L9.8 19L0 12H12.2Z" {...solid} /></S>,
];

function KeyGrid() {
  const cells = [];
  for (let r = 0; r < 5; r++)
    for (let c = 0; c < 8; c++)
      if (!(r === 0 && c % 3 === 1)) cells.push(<rect key={r + "-" + c} x={c * 5.2} y={r * 8 + 2} width="3.8" height="6" {...solid} />);
  return <S w={42} h={42} vb="0 0 42 42">{cells}</S>;
}

function Meter() {
  const rows = [];
  for (let i = 0; i < 36; i++) rows.push(`M0 ${i * 6 + 2}H16M20 ${i * 6 + 2}H36`);
  return (
    <svg width="36" height="216" viewBox="0 0 36 216">
      <path d={rows.join("")} stroke="#7d7e83" strokeWidth="4" />
      <rect x="0" width="16" height="54" fill="#75767a" />
      <rect x="20" width="16" height="54" fill="#75767a" />
      <circle cx="18" cy="54" r="10" fill="#ececec" />
    </svg>
  );
}

export default function App() {
  return (
    <>
      <GlobalStyle />
      <Desktop>
        <Window>
          <TitleBar>
            <Lights>
              <Light $fill="#ee6a5f" $edge="#d2544a"><LightDot /></Light>
              <Light $fill="#f5bf4f" $edge="#d6a243" />
              <Light $fill="#61c554" $edge="#50a73c" />
            </Lights>
            <Title>
              <svg width="22" height="22" viewBox="0 0 22 22" fill="none">
                <circle cx="11" cy="11" r="9.5" fill="#e4e4e4" stroke="#a2a2a2" strokeWidth="1.5" />
                <circle cx="11" cy="11" r="6" fill="#8a8a8a" />
                <path d="M9 8L14 11L9 14" stroke="#e8e8e8" strokeWidth="1.5" />
              </svg>
              main (unlocked)
            </Title>
          </TitleBar>

          <Toolbar>
            <ZoomMenu>
              <span>75%</span>
              <svg width="12" height="11" viewBox="0 0 12 11"><path d="M0 0H12L6 11Z" fill={C.icon} /></svg>
            </ZoomMenu>
            <Tools>
              {TOOLS.map((t, i) => (
                <Tool key={i} $gap={t.gap}>
                  {t.icon}
                  {t.more && <Down />}
                </Tool>
              ))}
            </Tools>
            <Search>
              <svg width="26" height="26" viewBox="0 0 26 26" fill="none" stroke="#6b6d71" strokeWidth="3">
                <circle cx="10.5" cy="10.5" r="8" />
                <path d="M16.5 16.5L24 24" strokeWidth="4" />
              </svg>
            </Search>
          </Toolbar>

          <Middle>
            <LeftRail>
              {LEFT.map((icon, i) => (
                <RailItem key={i} $w={32} $h={32}>{icon}</RailItem>
              ))}
            </LeftRail>

            <Canvas>
              <Grid>
                <defs>
                  <pattern id="dots" width="45" height="45" patternUnits="userSpaceOnUse">
                    <path d="M0 0H2V2H0ZM23 0H25V2H23ZM0 22H2V24H0ZM23 22H25V24H23Z" fill="#bcbdb6" />
                  </pattern>
                </defs>
                <rect width="100%" height="100%" fill="url(#dots)" />
              </Grid>
              <Layer>
                {NODES.map(([kind, ...d], i) => {
                  const Kind = KINDS[kind];
                  return <Kind key={i} d={d} />;
                })}
                <Menu />
                <Mic />
                <RangeSlider />
                <Waveform />
                <DryWet />
                <Gain />
                <VideoWindow />
                <Cables>
                  <path d="M2059 1108H2070V1110H2059ZM2058 1286A6 4 0 0 1 2070 1286Z" fill="#b4b5af" />
                  <g opacity="0.92">
                    {CONTROL.map((d, i) => <Cord key={i} d={d} />)}
                  </g>
                  {SIGNAL.concat(SIGNAL_FREE).map((d, i) => <SignalCord key={i} d={d} />)}
                  <path d="M1777 399V419" stroke="#2e3a2c" strokeWidth="5" />
                  <path d="M1777 401V408M1777 411V418" stroke="#8fe07e" strokeWidth="3" />
                </Cables>
              </Layer>
            </Canvas>

            <RightRail>
              <RailItem $w={42} $h={42} $after={84}><KeyGrid /></RailItem>
              <RailItem $w={32} $h={32} $after={60}>
                <S><circle cx="16" cy="16" r="16" {...solid} /><text x="16" y="27" fontSize="30" fill={C.chrome} {...serif}>i</text></S>
              </RailItem>
              <RailItem $w={32} $h={32} $after={60}><S><path d="M0 4H15V28H0ZM17 4H32V28H17Z" {...solid} /></S></RailItem>
              <RailItem $w={32} $h={32} $after={60}><S><path d="M0 4H4M8 4H32M0 12H4M8 12H32M0 20H4M8 20H32M0 28H4M8 28H32" strokeWidth="3.5" /></S></RailItem>
              <RailItem $w={32} $h={32} $after={60}><S><path d="M0 6Q8 1 15 6V28Q8 24 0 28ZM32 6Q24 1 17 6V28Q24 24 32 28Z" {...solid} /></S></RailItem>
              <RailItem $w={32} $h={32} $after={410}>
                <S>
                  <path d="M0 3H3V28H0ZM5 6H11L13 1H23L25 6H32V32H5Z" {...solid} />
                  <circle cx="18.5" cy="18.5" r="7" stroke={C.chrome} strokeWidth="3" />
                </S>
              </RailItem>
              <RailItem $w={36} $h={216}><Meter /></RailItem>
            </RightRail>
          </Middle>

          <BottomBar>
            <S w={34} h={34}><path d="M9 14H31V31H9Z" {...solid} /><path d="M2 16V8A5.5 5.5 0 0 1 13 8V14" strokeWidth="3" /><path d="M20 18V27" stroke={C.chrome} strokeWidth="4" /></S>
            <S w={34} h={34}><path d="M0 2H20V16H0Z" {...solid} /><path d="M11 11H33V29H11Z" fill={C.icon} stroke={C.chrome} strokeWidth="2" /></S>
            <S w={34} h={34}><path d="M1 2H31V22H1ZM4 32L14 20H18L28 32H24L16 24L8 32Z" {...solid} /></S>
            <S w={34} h={34}><path d="M8 0V32M16 0V32M24 0V32M0 8H32M0 16H32M0 24H32" strokeWidth="2" /></S>
            <S w={34} h={34}><g opacity=".3"><path d="M27 17L12 3.5C7 -1 -1 6 3 12L23 29C29 33 33 26 28 22L15 10.5" /><path d="M22 6H32M27 1V11" /></g></S>
            <S w={34} h={34}><path d="M2 26L17 13C15 6 20 0 27 2L22 7L25 10L31 6C32 13 26 18 20 16L7 31C3 32 0 29 2 26Z" {...solid} /></S>
            <Push>
              <S w={34} h={34}><path d="M9 6A12.5 12.5 0 1 0 23 6M16 1V16" strokeWidth="4" /></S>
            </Push>
          </BottomBar>
        </Window>
      </Desktop>
    </>
  );
}
